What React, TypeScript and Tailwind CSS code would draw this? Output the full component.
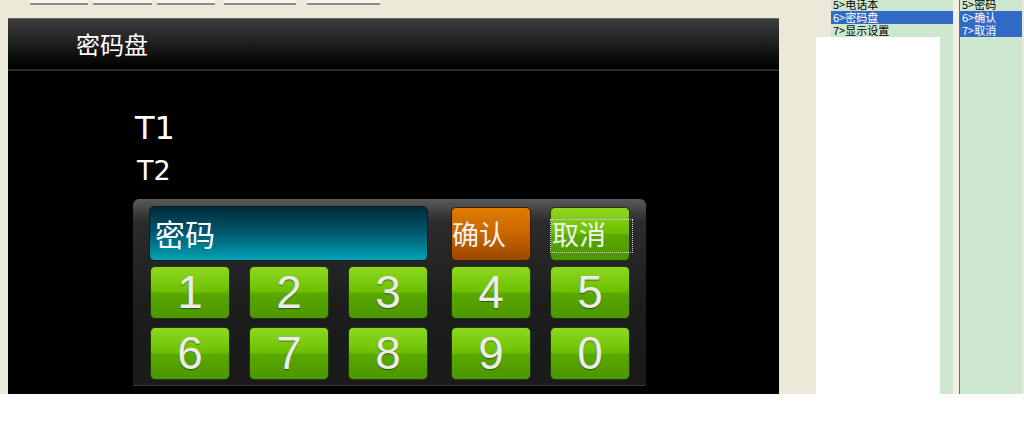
import React from 'react';

const greenBtn =
  'bg-[linear-gradient(to_bottom,#8fd822_0%,#6cc000_48%,#5aa800_52%,#4c9600_100%)] border border-[#1e3a05] rounded-[5px]';

const NumKey: React.FC<{ n: string }> = ({ n }) => (
  <div
    className={`${greenBtn} w-[80px] h-[53px] flex items-center justify-center pb-[1px] text-[46px] leading-none text-[#ececec] [text-shadow:0_1px_1px_rgba(0,0,0,0.45)]`}
    style={{ fontFamily: '"Liberation Sans", Arial, sans-serif' }}
  >
    {n}
  </div>
);

const ListRow: React.FC<{ text: string; selected?: boolean }> = ({ text, selected }) => (
  <div
    className={`h-[13px] leading-[13px] text-[11px] pl-[2px] whitespace-nowrap ${
      selected ? 'bg-[#316ac5] text-white' : 'text-black'
    }`}
  >
    {text}
  </div>
);

const cjk = { fontFamily: '"Noto Sans CJK SC", "DejaVu Sans", sans-serif' };

export default function App() {
  return (
    <div className="w-[1024px] h-[434px] flex flex-col bg-white overflow-hidden" style={cjk}>
      <div className="relative h-[394px] bg-[#ece9d8] flex">
        {/* left: tabs + device screen */}
        <div className="w-[779px] flex flex-col">
          <div className="h-[18px] flex items-start">
            <div className="ml-[30px] w-[58px] h-[5px] bg-[#f7f6ef] border-b-2 border-[#8e8e86]" />
            <div className="ml-[5px] w-[59px] h-[5px] bg-[#f7f6ef] border-b-2 border-[#8e8e86]" />
            <div className="ml-[5px] w-[58px] h-[5px] bg-[#f7f6ef] border-b-2 border-[#8e8e86]" />
            <div className="ml-[9px] w-[72px] h-[5px] bg-[#f7f6ef] border-b-2 border-[#8e8e86]" />
            <div className="ml-[11px] w-[73px] h-[5px] bg-[#f7f6ef] border-b-2 border-[#8e8e86]" />
          </div>
          <div className="ml-[8px] flex-1 bg-black flex flex-col">
            <div className="h-[51px] border-t border-[#6a6a6a] bg-[linear-gradient(to_bottom,#3e3e3e,#0a0a0a_80%,#000)] flex items-center pl-[68px] text-white text-[24px]">
              密码盘
            </div>
            <div className="h-[2px] bg-[#2c2c2c]" />
            <div className="flex flex-col pl-[125px]">
              <div
                className="mt-[42px] h-[30px] leading-[30px] text-[32px] text-white pl-[2px]"
                style={{ fontFamily: '"DejaVu Sans", sans-serif' }}
              >
                T1
              </div>
              <div
                className="mt-[15px] h-[26px] leading-[26px] text-[27px] text-white pl-[4px]"
                style={{ fontFamily: '"DejaVu Sans", sans-serif' }}
              >
                T2
              </div>
              <div className="mt-[15px] w-[513px] h-[187px] rounded-t-[6px] bg-[linear-gradient(to_bottom,#5a5a5a_0%,#2c2c2c_12%,#1c1c1c_60%,#1a1a1a_100%)] border-b border-[#3a3a3a] pt-[7px] pl-[16px] flex flex-col">
                <div className="flex">
                  <div className="w-[279px] h-[55px] rounded-[5px] border border-[#0a1a22] bg-[linear-gradient(to_bottom,#002a3a_0%,#005a70_50%,#00a2b4_100%)] flex items-center pl-[5px] text-[30px] text-white">
                    密码
                  </div>
                  <div className="ml-[23px] mt-[1px] w-[80px] h-[54px] rounded-[5px] border border-[#3a1a00] bg-[linear-gradient(to_bottom,#e07c00_0%,#c86600_50%,#9c4600_100%)] flex items-center text-[27px] text-[#f2f2f2]">
                    确认
                  </div>
                  <div
                    className={`${greenBtn} relative ml-[19px] mt-[1px] w-[80px] h-[54px] flex items-center text-[27px] text-[#f2f2f2]`}
                  >
                    <span className="pl-[1px]">取消</span>
                    <span className="absolute left-[-1px] top-[11px] w-[83px] h-[34px] border border-dotted border-[#d8d8d8]" />
                  </div>
                </div>
                <div className="flex mt-[5px]">
                  <div className="flex gap-[19px] ml-[1px]">
                    <NumKey n="1" />
                    <NumKey n="2" />
                    <NumKey n="3" />
                  </div>
                  <div className="flex gap-[19px] ml-[23px]">
                    <NumKey n="4" />
                    <NumKey n="5" />
                  </div>
                </div>
                <div className="flex mt-[8px]">
                  <div className="flex gap-[19px] ml-[1px]">
                    <NumKey n="6" />
                    <NumKey n="7" />
                    <NumKey n="8" />
                  </div>
                  <div className="flex gap-[19px] ml-[23px]">
                    <NumKey n="9" />
                    <NumKey n="0" />
                  </div>
                </div>
              </div>
            </div>
          </div>
        </div>

        {/* right: lists */}
        <div className="ml-[52px] w-[122px] bg-[#cde8cf] flex flex-col">
          <div className="mt-[-2px]">
            <ListRow text="5>电话本" />
            <ListRow text="6>密码盘" selected />
            <ListRow text="7>显示设置" />
          </div>
        </div>
        <div className="w-[6px] bg-[#f4efe2]" />
        <div className="w-[1px] bg-[#6e6e66]" />
        <div className="w-[62px] bg-[#cde8cf] flex flex-col">
          <div className="mt-[-2px]">
            <ListRow text="5>密码" />
            <ListRow text="6>确认" selected />
            <ListRow text="7>取消" selected />
          </div>
        </div>
        <div className="w-[2px] bg-[#ece9d8]" />

        <div className="absolute left-[816px] top-[37px] w-[124px] h-[357px] bg-white" />
      </div>
      <div className="flex-1 bg-white" />
    </div>
  );
}
